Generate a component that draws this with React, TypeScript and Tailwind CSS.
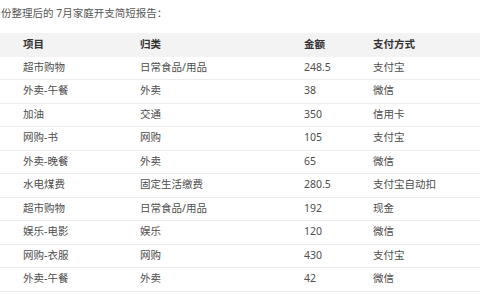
const rows = [
  ['超市购物', '日常食品/用品', '248.5', '支付宝'],
  ['外卖-午餐', '外卖', '38', '微信'],
  ['加油', '交通', '350', '信用卡'],
  ['网购-书', '网购', '105', '支付宝'],
  ['外卖-晚餐', '外卖', '65', '微信'],
  ['水电煤费', '固定生活缴费', '280.5', '支付宝自动扣'],
  ['超市购物', '日常食品/用品', '192', '现金'],
  ['娱乐-电影', '娱乐', '120', '微信'],
  ['网购-衣服', '网购', '430', '支付宝'],
  ['外卖-午餐', '外卖', '42', '微信'],
]

const cols = 'grid grid-cols-[140px_164px_69px_1fr] items-center h-[23.5px]'

const App = () => {
  return (
    <div className="w-[480px] h-[300px] overflow-hidden bg-white text-[10.5px] text-[#4d4d4d] font-['Noto_Sans','Noto_Sans_CJK_SC',sans-serif]">
      <div className="h-[33px] pt-[5px] pl-[1px] leading-[16px] text-[#555]">
        份整理后的 7月家庭开支简短报告：
      </div>
      <div className={`${cols} bg-[#f3f3f3] font-bold text-[#333]`}>
        <div className="pl-[23px]">项目</div>
        <div>归类</div>
        <div>金额</div>
        <div>支付方式</div>
      </div>
      {rows.map((r, i) => (
        <div key={i} className={`${cols} border-b border-[#ececec]`}>
          <div className="pl-[23px]">{r[0]}</div>
          <div>{r[1]}</div>
          <div>{r[2]}</div>
          <div>{r[3]}</div>
        </div>
      ))}
    </div>
  )
}

export default App
